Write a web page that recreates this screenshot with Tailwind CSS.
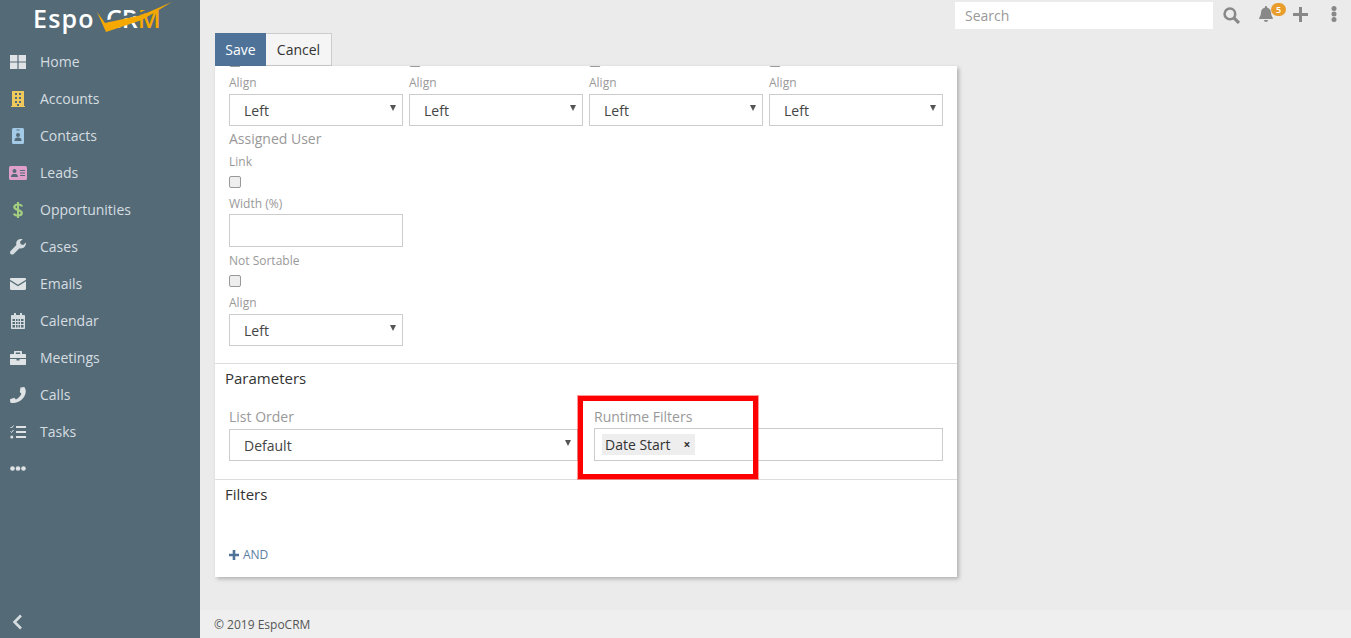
<!DOCTYPE html>
<html lang="en">
<head>
  <meta charset="UTF-8">
  <title>EspoCRM</title>
  <script src="https://cdn.jsdelivr.net/npm/@tailwindcss/browser@4"></script>
</head>
<body class="bg-[#ebebeb] font-['Open_Sans',sans-serif] text-[14px] text-[#333]">
  <div class="flex h-[638px] w-[1351px] overflow-hidden relative">
    <!-- Sidebar -->
    <aside class="w-[200px] shrink-0 bg-[#546b77] flex flex-col text-[#d6dde1]">
      <div class="h-[43px] relative overflow-hidden">
        <span class="absolute left-[33px] top-[1px] text-[25px] leading-[34px] font-semibold text-white tracking-[1.200px]">Espo</span>
        <span class="absolute left-[106px] top-[1px] text-[25px] leading-[34px] font-semibold text-white">CR<span class="text-[#f5a800]">M</span></span>
        <svg class="absolute left-[95px] top-[0px]" width="80" height="36" viewBox="0 0 80 36"><path d="M10 22 L47 13 L72 3" fill="none" stroke="#546b77" stroke-width="2.500"/><path d="M2 12 L10 23 L47 15 L77 2 L47 20 L11 32 Z" fill="#f5a800"/></svg>
      </div>
      <nav class="flex flex-col">
        <a class="h-[37px] flex items-center">
          <span class="w-[40px] flex justify-center pr-[4px]"><svg width="16" height="14" viewBox="0 0 16 14" fill="#dfe3e5"><path d="M0 0h7.400v6.400H0zM8.600 0H16v6.400H8.600zM0 7.600h7.400V14H0zM8.600 7.600H16V14H8.600z"/></svg></span>Home
        </a>
        <a class="h-[37px] flex items-center">
          <span class="w-[40px] flex justify-center pr-[4px]"><svg width="14" height="16" viewBox="0 0 14 16"><path d="M1 0h12v15H1z" fill="#f0c95c"/><path d="M0 15h14v1H0z" fill="#f0c95c"/><path d="M4 2h2v2H4zM8 2h2v2H8zM4 6h2v2H4zM8 6h2v2H8zM4 10h2v2H4zM8 10h2v2H8zM6 13h2v2H6z" fill="#546b77"/></svg></span>Accounts
        </a>
        <a class="h-[37px] flex items-center">
          <span class="w-[40px] flex justify-center pr-[4px]"><svg width="12" height="16" viewBox="0 0 12 16"><rect width="12" height="16" rx="1.500" fill="#a3cbe8"/><path d="M4.500 1.500h3v1h-3z" fill="#546b77"/><circle cx="6" cy="7" r="2" fill="#546b77"/><path d="M2.500 13c0-3 1.500-3.500 3.500-3.500s3.500.5 3.500 3.500z" fill="#546b77"/></svg></span>Contacts
        </a>
        <a class="h-[37px] flex items-center">
          <span class="w-[40px] flex justify-center pr-[4px]"><svg width="18" height="14" viewBox="0 0 18 14"><rect width="18" height="14" rx="1.500" fill="#de9fcb"/><circle cx="5.500" cy="5" r="2" fill="#546b77"/><path d="M2 11c0-2.500 1.500-3 3.500-3s3.500.5 3.500 3z" fill="#546b77"/><path d="M11 4h5v1h-5zM11 6.500h5v1h-5zM11 9h5v1h-5z" fill="#546b77"/></svg></span>Leads
        </a>
        <a class="h-[37px] flex items-center">
          <span class="w-[40px] flex justify-center pr-[4px]"><svg width="10" height="16" viewBox="0 0 10 16" fill="none" stroke="#a3cf7e" stroke-width="2.200"><path d="M9 4.500C8.500 3 7 2.500 5 2.500 3 2.500 1.300 3.300 1.300 5S3 7.300 5 8s3.800 1.300 3.800 3S7 13.500 5 13.500C3 13.500 1.500 13 1 11.500"/><path d="M5 0v16" stroke-width="2"/></svg></span>Opportunities
        </a>
        <a class="h-[37px] flex items-center">
          <span class="w-[40px] flex justify-center pr-[4px]"><svg width="16" height="16" viewBox="0 0 16 16" fill="#d6dde1"><path d="M15.800 3.400l-2.600 2.600-2.500-.7-.7-2.500L12.600.2C10.800-.4 8.800 0 7.500 1.300 6.200 2.600 5.900 4.500 6.400 6.100L.6 11.900c-.8.800-.8 2.200 0 3.100.9.800 2.300.8 3.100 0l5.800-5.800c1.700.5 3.500.2 4.900-1.200 1.300-1.300 1.700-3.200 1.400-4.600z"/></svg></span>Cases
        </a>
        <a class="h-[37px] flex items-center">
          <span class="w-[40px] flex justify-center pr-[4px]"><svg width="16" height="12" viewBox="0 0 16 12" fill="#dfe3e5"><path d="M0 1.200C0 .5.500 0 1.200 0h13.600c.7 0 1.200.5 1.200 1.200v.5L8 6.800 0 1.700z"/><path d="M0 3.200l8 5 8-5v7.600c0 .7-.5 1.200-1.200 1.200H1.200C.5 12 0 11.500 0 10.800z"/></svg></span>Emails
        </a>
        <a class="h-[37px] flex items-center">
          <span class="w-[40px] flex justify-center pr-[4px]"><svg width="14" height="16" viewBox="0 0 14 16" fill="#d6dde1"><path d="M3 0h2v2h4V0h2v2h2c.6 0 1 .4 1 1v12c0 .6-.4 1-1 1H1c-.6 0-1-.4-1-1V3c0-.6.4-1 1-1h2z"/><path d="M1.500 6h2.500v2H1.500zM5 6h1.500v2H5zM7.500 6H9v2H7.500zM10 6h2.500v2H10zM1.500 9h2.500v2H1.500zM5 9h1.500v2H5zM7.500 9H9v2H7.500zM10 9h2.500v2H10zM1.500 12h2.500v2.500H1.500zM5 12h1.500v2.500H5zM7.500 12H9v2.500H7.500zM10 12h2.500v2.500H10z" fill="#546b77"/></svg></span>Calendar
        </a>
        <a class="h-[37px] flex items-center">
          <span class="w-[40px] flex justify-center pr-[4px]"><svg width="16" height="14" viewBox="0 0 16 14" fill="#dfe3e5"><path d="M5 0h6c.6 0 1 .4 1 1v2h3c.6 0 1 .4 1 1v3H0V4c0-.6.4-1 1-1h3V1c0-.6.400-1 1-1zm.8 1.500V3h4.400V1.500z"/><path d="M0 8h6.500v1.500h3V8H16v5c0 .6-.4 1-1 1H1c-.6 0-1-.4-1-1z"/></svg></span>Meetings
        </a>
        <a class="h-[37px] flex items-center">
          <span class="w-[40px] flex justify-center pr-[4px]"><svg width="16" height="16" viewBox="0 0 16 16" fill="#dfe3e5"><path d="M10.500.6L14.300 0c.8 1.200 1.500 2.500 1.500 4.200C15.800 10.500 9.500 16 3.200 16 2 16 1 15.800.3 15.400L0 12.200l4.300-1.500 1.600 1.700c2.500-1.100 4.500-3.200 5.500-5.700L9.800 5z"/></svg></span>Calls
        </a>
        <a class="h-[37px] flex items-center">
          <span class="w-[40px] flex justify-center pr-[4px]"><svg width="16" height="14" viewBox="0 0 16 14" fill="#dfe3e5"><path d="M6 1h10v2H6zM6 6h10v2H6zM6 11h10v2H6z"/><path d="M.5 2l1 1L3.500.5" fill="none" stroke="#dfe3e5" stroke-width="1"/><path d="M.5 6.500l1 1 2-2.500" fill="none" stroke="#dfe3e5" stroke-width="1"/><circle cx="1.800" cy="12" r="1.500"/></svg></span>Tasks
        </a>
        <a class="h-[37px] flex items-center">
          <span class="w-[40px] flex justify-center pr-[4px]"><svg width="16" height="5" viewBox="0 0 16 5" fill="#dfe3e5"><circle cx="2.500" cy="2.500" r="2.300"/><circle cx="8" cy="2.500" r="2.300"/><circle cx="13.500" cy="2.500" r="2.300"/></svg></span>
        </a>
      </nav>
      <div class="mt-auto h-[32px] pl-[12px] flex items-center">
        <svg width="11" height="16" viewBox="0 0 11 16" fill="none" stroke="#d6dde1" stroke-width="2.600"><path d="M9 1.500L2.500 8 9 14.500"/></svg>
      </div>
    </aside>

    <!-- Main -->
    <div class="flex-1 flex flex-col min-w-0">
      <header class="h-[33px] shrink-0 flex items-start">
        <input class="ml-[755px] mt-[2px] w-[258px] h-[27px] bg-white px-[10px] text-[14px] placeholder:text-[#999] outline-none" placeholder="Search">
        <div class="relative flex-1 h-[33px]">
          <svg class="absolute left-[10px] top-[7px]" width="17" height="17" viewBox="0 0 16 16" fill="none" stroke="#888" stroke-width="2.400"><circle cx="6.500" cy="6.500" r="5"/><path d="M10.200 10.200L15 15" stroke-width="3"/></svg>
          <svg class="absolute left-[46px] top-[6px]" width="14" height="16" viewBox="0 0 14 16" fill="#888"><path d="M7 0c.6 0 1 .4 1 1v.6c2.300.5 4 2.500 4 4.900 0 3.500 2 4.800 2 6.500H0c0-1.700 2-3 2-6.500 0-2.400 1.700-4.400 4-4.900V1c0-.6.400-1 1-1z"/><path d="M5 14h4c0 1.100-.9 2-2 2s-2-.9-2-2z"/></svg>
          <span class="absolute left-[58px] top-[3px] w-[15px] h-[13px] rounded-full bg-[#e89d2c] text-white text-[9px] leading-[13px] text-center font-semibold">5</span>
          <svg class="absolute left-[80px] top-[7px]" width="15" height="15" viewBox="0 0 15 15" fill="#888"><path d="M6 0h3v6h6v3H9v6H6V9H0V6h6z"/></svg>
          <svg class="absolute left-[118px] top-[6px]" width="6" height="16" viewBox="0 0 6 16" fill="#888"><circle cx="3" cy="2.500" r="2.500"/><circle cx="3" cy="8" r="2.500"/><circle cx="3" cy="13.500" r="2.500"/></svg>
        </div>
      </header>

      <div class="flex pl-[15px] h-[33px] shrink-0">
        <button class="w-[51px] bg-[#4f7398] text-white">Save</button>
        <button class="w-[66px] bg-[#f5f5f5] border border-[#ccc] border-l-0 text-[#333]">Cancel</button>
      </div>

      <section class="ml-[15px] w-[742px] h-[511px] bg-white shadow-[2px_2px_4px_rgba(0,0,0,0.25)] overflow-hidden relative shrink-0">
        <!-- cut-off column row -->
        <div class="flex gap-[6px] pl-[14px] -mt-[11px] h-[10px]">
          <span class="w-[174px]"><i class="block w-[12px] h-[12px] rounded-[2px] border border-[#999] bg-[#eee]"></i></span>
          <span class="w-[174px]"><i class="block w-[12px] h-[12px] rounded-[2px] border border-[#999] bg-[#eee]"></i></span>
          <span class="w-[174px]"><i class="block w-[12px] h-[12px] rounded-[2px] border border-[#999] bg-[#eee]"></i></span>
          <span class="w-[174px]"><i class="block w-[12px] h-[12px] rounded-[2px] border border-[#999] bg-[#eee]"></i></span>
        </div>
        <div class="flex gap-[6px] pl-[14px] mt-[11px]">
          <div class="w-[174px]">
            <div class="text-[12px] leading-[14px] text-[#999] h-[18px]">Align</div>
            <div class="relative h-[32px] border border-[#ccc] pl-[14px] leading-[32px] text-[#444]">Left<span class="absolute right-[6px] top-[10px] w-0 h-0 border-x-[3.500px] border-x-transparent border-t-[6px] border-t-[#555]"></span></div>
          </div>
          <div class="w-[174px]">
            <div class="text-[12px] leading-[14px] text-[#999] h-[18px]">Align</div>
            <div class="relative h-[32px] border border-[#ccc] pl-[14px] leading-[32px] text-[#444]">Left<span class="absolute right-[6px] top-[10px] w-0 h-0 border-x-[3.500px] border-x-transparent border-t-[6px] border-t-[#555]"></span></div>
          </div>
          <div class="w-[174px]">
            <div class="text-[12px] leading-[14px] text-[#999] h-[18px]">Align</div>
            <div class="relative h-[32px] border border-[#ccc] pl-[14px] leading-[32px] text-[#444]">Left<span class="absolute right-[6px] top-[10px] w-0 h-0 border-x-[3.500px] border-x-transparent border-t-[6px] border-t-[#555]"></span></div>
          </div>
          <div class="w-[174px]">
            <div class="text-[12px] leading-[14px] text-[#999] h-[18px]">Align</div>
            <div class="relative h-[32px] border border-[#ccc] pl-[14px] leading-[32px] text-[#444]">Left<span class="absolute right-[6px] top-[10px] w-0 h-0 border-x-[3.500px] border-x-transparent border-t-[6px] border-t-[#555]"></span></div>
          </div>
        </div>
        <div class="pl-[14px] w-[188px] mt-[3px]">
          <div class="h-[20px] leading-[20px] text-[#999]">Assigned User</div>
          <div class="mt-[4px] h-[18px] text-[12px] leading-[18px] text-[#999]">Link</div>
          <i class="block mt-[5px] w-[12px] h-[12px] rounded-[2px] border border-[#999] bg-[#eee]"></i>
          <div class="mt-[7px] h-[18px] text-[12px] leading-[18px] text-[#999]">Width (%)</div>
          <div class="mt-[1px] h-[33px] border border-[#ccc]"></div>
          <div class="mt-[5px] h-[18px] text-[12px] leading-[18px] text-[#999]">Not Sortable</div>
          <i class="block mt-[5px] w-[12px] h-[12px] rounded-[2px] border border-[#999] bg-[#eee]"></i>
          <div class="mt-[7px] h-[18px] text-[12px] leading-[18px] text-[#999]">Align</div>
          <div class="mt-[2px] relative h-[32px] border border-[#ccc] pl-[14px] leading-[32px] text-[#444]">Left<span class="absolute right-[6px] top-[10px] w-0 h-0 border-x-[3.500px] border-x-transparent border-t-[6px] border-t-[#555]"></span></div>
        </div>

        <div class="mt-[17px] border-t border-[#ddd] px-[10px] h-[30px] leading-[29px] text-[15px] text-[#333]">Parameters</div>
        <div class="flex gap-[16px] pl-[14px] mt-[14px]">
          <div class="w-[349px]">
            <div class="h-[22px] leading-[20px] text-[#999]">List Order</div>
            <div class="relative h-[32px] border border-[#ccc] pl-[14px] leading-[31px] text-[#444]">Default<span class="absolute right-[6px] top-[10px] w-0 h-0 border-x-[3.500px] border-x-transparent border-t-[6px] border-t-[#555]"></span></div>
          </div>
          <div class="w-[349px]">
            <div class="h-[21px] leading-[20px] text-[#999]">Runtime Filters</div>
            <div class="h-[33px] border border-[#ccc] pl-[7px] pt-[5px]">
              <span class="inline-flex items-center h-[21px] w-[93px] bg-[#eee] pl-[3px] text-[#333]">Date Start<span class="ml-[13px] text-[12px] font-bold">×</span></span>
            </div>
          </div>
        </div>

        <div class="mt-[18px] border-t border-[#ddd] px-[10px] h-[30px] leading-[29px] text-[15px] text-[#333]">Filters</div>
        <div class="pl-[14px] mt-[36px] flex items-center text-[12px] text-[#5a7ea3] h-[20px]">
          <svg class="mr-[4px]" width="10" height="10" viewBox="0 0 10 10" fill="#4f7398"><path d="M3.700 0h2.600v3.700H10v2.600H6.300V10H3.700V6.300H0V3.700h3.700z"/></svg>AND
        </div>
      </section>

      <footer class="mt-auto h-[28px] bg-[#efefef] pl-[14px] leading-[29px] text-[12px] text-[#555]">© 2019 EspoCRM</footer>
    </div>

    <!-- Highlight box drawn over the screenshot -->
    <div class="absolute left-[578px] top-[396px] w-[180px] h-[83px] border-[5px] border-[#f00] ring-1 ring-[#f00]/40"></div>
  </div>
</body>
</html>
